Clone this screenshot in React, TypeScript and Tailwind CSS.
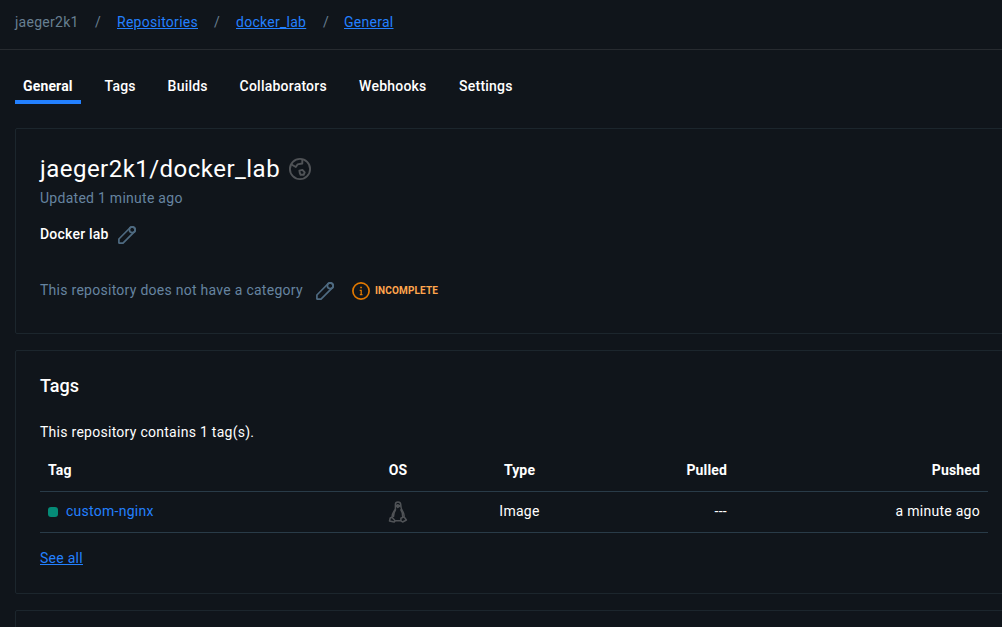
import React from "react";

const tabs = [
  { label: "Tags", width: "w-[31px]" },
  { label: "Builds", width: "w-[40px]" },
  { label: "Collaborators", width: "w-[87.5px]" },
  { label: "Webhooks", width: "w-[68px]" },
  { label: "Settings", width: "w-[54px]" },
];

function Pencil() {
  return (
    <svg className="relative top-px size-6 shrink-0 text-[#4e6a81]" viewBox="0 0 24 24" fill="none" stroke="currentColor" strokeWidth="1.7" strokeLinejoin="round">
      <path d="M3.9 19.9V16L15.3 4.5A3 3 0 0 1 19.5 8.7L8 20.1H4.2Z" />
      <circle cx="17.3" cy="6.7" r="2.9" />
    </svg>
  );
}

function Globe() {
  return (
    <svg className="size-6 shrink-0 text-[#505357]" viewBox="0 0 24 24" fill="none" stroke="currentColor" strokeWidth="1.9" strokeLinejoin="round">
      <circle cx="12" cy="12" r="10.1" />
      <path d="M3.5 7.5L7.8 10L9.5 7.4L14.3 6.5V2.2" />
      <path d="M11.4 13.6L14.4 12.9L16.7 15.3L15.6 17.8H12.6L11.8 16Z" />
    </svg>
  );
}

function Info() {
  return (
    <svg className="size-[18px] shrink-0 text-[#e07800]" viewBox="0 0 18 18" fill="none" stroke="currentColor" strokeWidth="1.7">
      <circle cx="9" cy="9" r="8.1" />
      <path d="M7.7 8.3H9.2V12.8M7.8 12.6H10.5" strokeWidth="1.3" />
      <path d="M8.2 5.5H9.9" strokeWidth="1.6" />
    </svg>
  );
}

function Penguin() {
  return (
    <svg className="h-6 w-5 shrink-0 text-[#505357]" viewBox="0 0 20 24" fill="none" stroke="currentColor" strokeWidth="1.5" strokeLinejoin="round">
      <path d="M7.4 8.4V4.4C7.4 1.2 12.5 1.2 12.7 4.4C12.8 8.3 13.5 9.6 14.7 11.4C16 13.4 16.3 15.3 16 16.8L18.4 20L14.6 22L12.8 20.8H7.4L6.2 22L1.5 21L2.2 18L4 17.2C4.1 14.5 5 12.7 6 11.2C7 10.1 7.4 9.5 7.4 8.4Z" />
      <path d="M7.9 5.6L10 4.8L12 5.9L9.8 7.4Z" fill="currentColor" />
      <path d="M4 17.2L7.3 21M16 16.8L12.9 18.2V21M7.8 9.2C5.8 12.6 5.3 14.6 5.4 17M12.6 9.2C14.3 11.6 14.9 14 14.7 16.8" />
    </svg>
  );
}

export default function App() {
  return (
    <div className="h-[627px] w-[1002px] overflow-hidden bg-[#10151b] font-['Roboto',sans-serif] text-[14px] leading-[21px] tracking-[0.27px] text-white">
      <nav className="flex h-[50px] items-start border-b border-[#272b30] pt-[12px] pl-[15px] text-[#677f91]">
        <span className="w-[80px]">jaeger2k1</span>
        <span className="w-[22px]">/</span>
        <a className="w-[97px] text-[#2380ff]"><span className="underline">Repositories</span></a>
        <span className="w-[22px]">/</span>
        <a className="w-[87px] text-[#2380ff]"><span className="underline">docker_lab</span></a>
        <span className="w-[21px]">/</span>
        <a className="text-[#2380ff] underline">General</a>
      </nav>
      <div className="flex h-[54px] gap-8 pl-[15px] font-medium tracking-[0.22px]">
        <div className="-mr-2 w-[65.6px] border-b-4 border-[#2380ff] pt-[26px] pl-2 font-bold tracking-[0.15px]">General</div>
        {tabs.map((t) => (
          <div key={t.label} className={`pt-[26px] whitespace-nowrap ${t.width}`}>{t.label}</div>
        ))}
      </div>
      <main className="mt-6 ml-[15px] flex w-[1000px] flex-col gap-4">
        <section className="h-[206px] rounded-xs border border-[#1c262d] px-6 pt-6">
          <div className="flex h-8 items-center gap-2">
            <h1 className="text-[24px] leading-8 tracking-[0.47px]">jaeger2k1/docker_lab</h1>
            <Globe />
          </div>
          <p className="mt-[3px] text-[#6684a0]">Updated 1 minute ago</p>
          <div className="mt-[13px] flex h-6 items-center gap-[6px]">
            <span className="font-medium tracking-[0.22px]">Docker lab</span>
            <Pencil />
          </div>
          <div className="mt-8 flex h-6 items-center">
            <span className="mr-[9px] w-[264px] whitespace-nowrap text-[#6684a0]">This repository does not have a category</span>
            <Pencil />
            <span className="mt-[2px] ml-[15px] flex items-center gap-[5px]">
              <Info />
              <span className="-mt-[2px] text-[10px] font-bold tracking-[0.15px] text-[#ffa64d]">INCOMPLETE</span>
            </span>
          </div>
        </section>
        <section className="h-[244px] rounded-xs border border-[#1c262d] px-6 pt-[22px]">
          <h2 className="text-[18px] leading-[26px] font-medium tracking-normal">Tags</h2>
          <p className="mt-[23px]">This repository contains 1 tag(s).</p>
          <table className="mt-[6px] w-[948px] table-fixed border-collapse">
            <colgroup>
              <col className="w-[300px]" />
              <col className="w-[116px]" />
              <col className="w-[127px]" />
              <col className="w-[152px]" />
              <col className="w-[253px]" />
            </colgroup>
            <thead>
              <tr className="h-[42px] border-b border-[#293b48] tracking-[0.15px]">
                <th className="px-2 pt-px text-left font-bold">Tag</th>
                <th className="pt-px font-bold">OS</th>
                <th className="pt-px font-bold">Type</th>
                <th className="px-2 pt-px text-right font-bold">Pulled</th>
                <th className="px-2 pt-px text-right font-bold">Pushed</th>
              </tr>
            </thead>
            <tbody>
              <tr className="h-[41px] border-b border-[#293b48]">
                <td className="px-2">
                  <div className="flex items-center gap-2">
                    <span className="mt-px size-[10px] rounded-[3px] bg-[#058b77]" />
                    <a className="text-[#2380ff]">custom-nginx</a>
                  </div>
                </td>
                <td><div className="flex justify-center"><Penguin /></div></td>
                <td className="text-center">Image</td>
                <td className="px-2 text-right">---</td>
                <td className="px-2 text-right">a minute ago</td>
              </tr>
            </tbody>
          </table>
          <a className="mt-[15px] inline-block text-[#2380ff] underline">See all</a>
        </section>
        <section className="h-[60px] rounded-xs border border-[#1c262d]" />
      </main>
    </div>
  );
}
